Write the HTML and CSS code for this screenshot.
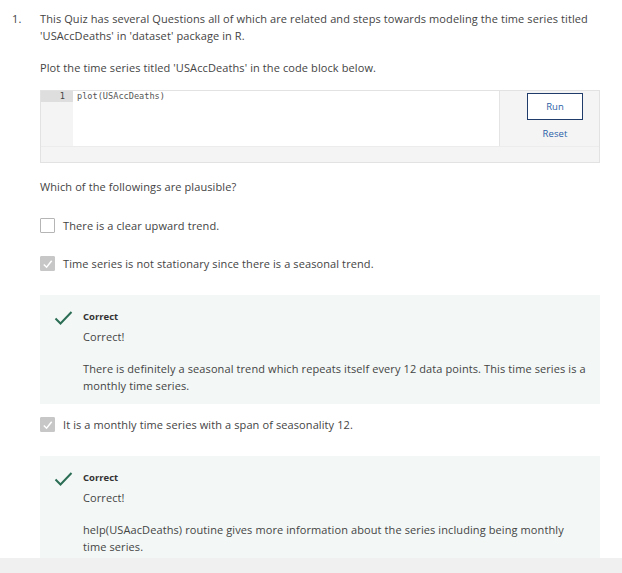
FILE: index.html
```html
<!DOCTYPE html>
<html>
<head>
<meta charset="utf-8">
<link rel="stylesheet" href="styles.css">
</head>
<body>
<div class="page">
  <div class="question">
    <div class="qnum">1.</div>
    <div class="qbody">
      <p class="prompt">This Quiz has several Questions all of which are related and steps towards modeling the time series titled 'USAccDeaths' in 'dataset' package in R.</p>
      <p class="prompt2">Plot the time series titled 'USAccDeaths' in the code block below.</p>
      <div class="codeblock">
        <div class="coderow">
          <div class="editor">
            <div class="gutter"><div class="ln active">1</div></div>
            <div class="code"><span class="line">plot(USAccDeaths)</span></div>
          </div>
          <div class="actions">
            <button class="run">Run</button>
            <span class="reset">Reset</span>
          </div>
        </div>
        <div class="codefoot"></div>
      </div>
      <p class="which">Which of the followings are plausible?</p>

      <div class="option opt1">
        <span class="box"></span>
        <span class="otext">There is a clear upward trend.</span>
      </div>

      <div class="option checked opt2">
        <span class="box"><svg width="14" height="14" viewBox="0 0 14 14"><polyline points="3,7.5 6,10.5 11.5,3.5" fill="none" stroke="#fff" stroke-width="1.6"/></svg></span>
        <span class="otext">Time series is not stationary since there is a seasonal trend.</span>
      </div>

      <div class="feedback fb1">
        <svg class="tick" width="20" height="16" viewBox="0 0 20 16"><polyline points="1.5,8.5 6.5,13.5 17.5,2" fill="none" stroke="#2b6e55" stroke-width="2"/></svg>
        <div class="fbody">
          <div class="ftitle">Correct</div>
          <p class="fmsg">Correct!</p>
          <p class="fexp">There is definitely a seasonal trend which repeats itself every 12 data points. This time series is a monthly time series.</p>
        </div>
      </div>

      <div class="option checked opt3">
        <span class="box"><svg width="14" height="14" viewBox="0 0 14 14"><polyline points="3,7.5 6,10.5 11.5,3.5" fill="none" stroke="#fff" stroke-width="1.6"/></svg></span>
        <span class="otext">It is a monthly time series with a span of seasonality 12.</span>
      </div>

      <div class="feedback fb2">
        <svg class="tick" width="20" height="16" viewBox="0 0 20 16"><polyline points="1.5,8.5 6.5,13.5 17.5,2" fill="none" stroke="#2b6e55" stroke-width="2"/></svg>
        <div class="fbody">
          <div class="ftitle">Correct</div>
          <p class="fmsg">Correct!</p>
          <p class="fexp">help(USAacDeaths) routine gives more information about the series including being monthly time series.</p>
        </div>
      </div>
    </div>
  </div>
  <div class="bottombar"></div>
</div>
</body>
</html>
```

FILE: styles.css
```css
* { box-sizing: border-box; }
html, body { margin: 0; padding: 0; background: #fff; }
body {
  font-family: "Open Sans", "DejaVu Sans", sans-serif;
  font-size: 11px;
  line-height: 17px;
  letter-spacing: 0.1px;
  color: #444;
  width: 622px;
  height: 573px;
  overflow: hidden;
}
.page { position: relative; height: 573px; }
p { margin: 0; }
.question {
  display: flex;
  padding-top: 10px;
}
.qnum { width: 40px; padding-left: 12px; }
.qbody { width: 560px; }
.prompt2 { margin-top: 15px; }
.codeblock {
  margin-top: 14px;
  border: 1px solid #e2e2e2;
  background: #f4f4f4;
}
.coderow { display: flex; height: 55px; }
.editor { display: flex; flex: 1; border-right: 1px solid #e4e4e4; }
.gutter { width: 32px; background: #f4f4f4; }
.ln {
  height: 11px;
  font-family: "DejaVu Sans Mono", monospace;
  font-size: 8.6px;
  letter-spacing: 0;
  line-height: 11px;
  text-align: right;
  padding-right: 8px;
  color: #444;
}
.ln.active { background: #dedede; }
.code {
  flex: 1;
  background: #fff;
  font-family: "DejaVu Sans Mono", monospace;
  font-size: 8.6px;
  letter-spacing: 0;
  line-height: 11px;
  padding-left: 4px;
  color: #555;
}
.actions {
  width: 99px;
  display: flex;
  flex-direction: column;
  align-items: center;
  padding-top: 2px;
  padding-left: 11px;
}
.run {
  width: 56px;
  height: 27px;
  border: 1px solid #1f3c6b;
  background: #fff;
  color: #2a5fa8;
  font-family: "Open Sans", sans-serif;
  font-size: 9.5px;
  padding: 0;
}
.reset {
  margin-top: 7px;
  color: #2a5fa8;
  font-size: 9.5px;
  line-height: 14px;
}
.codefoot { height: 16px; border-top: 1px solid #ececec; }
.which { margin-top: 15px; }
.option {
  display: flex;
  align-items: center;
  height: 17px;
}
.opt1 { margin-top: 22px; }
.opt2 { margin-top: 21px; }
.box {
  width: 15px;
  height: 15px;
  border: 1px solid #b5b5b5;
  border-radius: 1px;
  margin-right: 8px;
  display: flex;
  align-items: center;
  justify-content: center;
}
.checked .box { background: #c7c7c7; border-color: #c7c7c7; }
.feedback {
  background: #f3f8f6;
  display: flex;
  padding: 13px 0 10px 14px;
}
.fb1 { margin-top: 23px; }
.tick { margin-top: 2px; margin-right: 9px; flex: none; }
.fbody { flex: 1; padding-right: 14px; }
.ftitle { font-weight: 700; font-size: 9.5px; line-height: 17px; color: #333; letter-spacing: 0; }
.fmsg { margin-top: 3px; }
.fexp { margin-top: 15px; }
.opt3 { margin-top: 12px; }
.fb2 { margin-top: 23px; }
.bottombar {
  position: absolute;
  left: 0; right: 0; bottom: 0;
  height: 15px;
  background: #f0f0f0;
}
```
